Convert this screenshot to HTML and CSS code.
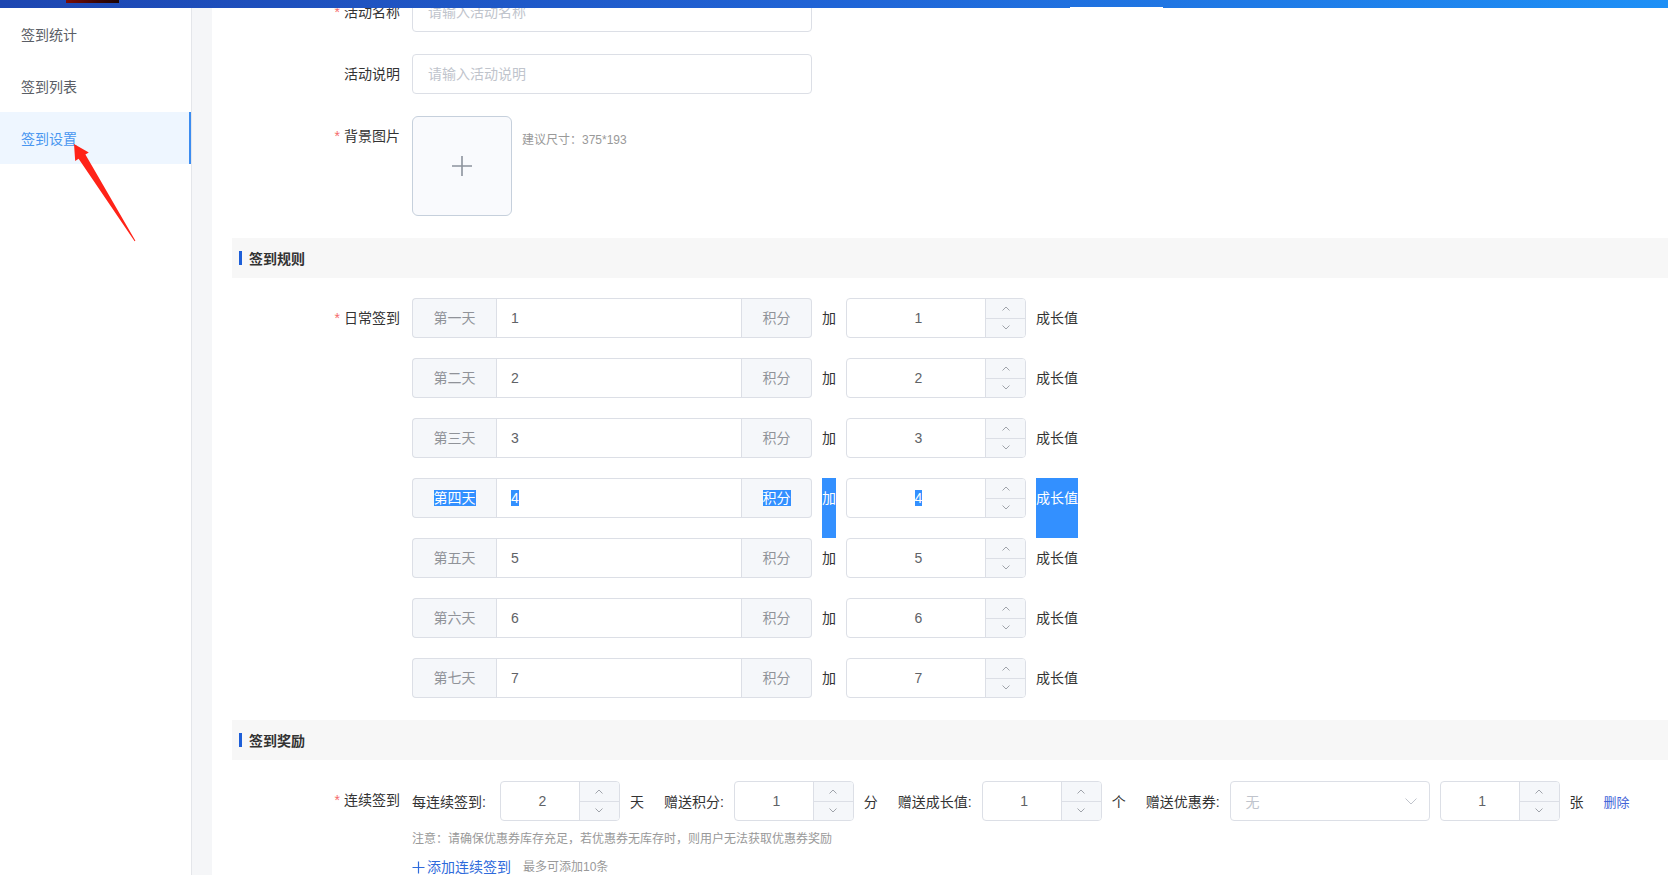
FILE: index.html
```html
<!DOCTYPE html>
<html lang="zh-CN">
<head>
<meta charset="utf-8">
<title>签到设置</title>
<link rel="stylesheet" href="styles.css">
</head>
<body>
<header class="topbar">
  <div class="logo-strip"></div>
  <div class="tab-line"></div>
</header>
<div class="layout">
  <aside class="sidebar">
    <div class="menu-item">签到统计</div>
    <div class="menu-item">签到列表</div>
    <div class="menu-item active">签到设置</div>
  </aside>
  <main class="main">
    <div class="card">
      <div class="form">
        <div class="form-item">
          <div class="label"><span class="req">*</span>活动名称</div>
          <div class="input placeholder">请输入活动名称</div>
        </div>
        <div class="form-item">
          <div class="label">活动说明</div>
          <div class="input placeholder">请输入活动说明</div>
        </div>
        <div class="form-item">
          <div class="label"><span class="req">*</span>背景图片</div>
          <div class="upload">
            <svg width="20" height="20" viewBox="0 0 20 20"><path d="M10 0V20M0 10H20" stroke="#8c939d" stroke-width="1.6" fill="none"/></svg>
          </div>
          <div class="upload-tip">建议尺寸：375*193</div>
        </div>

        <div class="section-head"><span class="bar"></span><span class="section-title">签到规则</span></div>

        <div class="form-item">
          <div class="label"><span class="req">*</span>日常签到</div>
          <div class="rows">
            <div class="row">
              <div class="group"><div class="prepend">第一天</div><div class="mid">1</div><div class="append">积分</div></div>
              <span class="word">加</span>
              <div class="num"><div class="num-val">1</div><div class="ctrl"><div class="ctrl-btn"><svg width="8" height="5" viewBox="0 0 8 5"><path d="M0.5 4.5L4 1L7.5 4.5" stroke="#a0a4ab" fill="none"/></svg></div><div class="ctrl-btn down"><svg width="8" height="5" viewBox="0 0 8 5"><path d="M0.5 0.5L4 4L7.5 0.5" stroke="#a0a4ab" fill="none"/></svg></div></div></div>
              <span class="word wide">成长值</span>
            </div>
            <div class="row">
              <div class="group"><div class="prepend">第二天</div><div class="mid">2</div><div class="append">积分</div></div>
              <span class="word">加</span>
              <div class="num"><div class="num-val">2</div><div class="ctrl"><div class="ctrl-btn"><svg width="8" height="5" viewBox="0 0 8 5"><path d="M0.5 4.5L4 1L7.5 4.5" stroke="#a0a4ab" fill="none"/></svg></div><div class="ctrl-btn down"><svg width="8" height="5" viewBox="0 0 8 5"><path d="M0.5 0.5L4 4L7.5 0.5" stroke="#a0a4ab" fill="none"/></svg></div></div></div>
              <span class="word wide">成长值</span>
            </div>
            <div class="row">
              <div class="group"><div class="prepend">第三天</div><div class="mid">3</div><div class="append">积分</div></div>
              <span class="word">加</span>
              <div class="num"><div class="num-val">3</div><div class="ctrl"><div class="ctrl-btn"><svg width="8" height="5" viewBox="0 0 8 5"><path d="M0.5 4.5L4 1L7.5 4.5" stroke="#a0a4ab" fill="none"/></svg></div><div class="ctrl-btn down"><svg width="8" height="5" viewBox="0 0 8 5"><path d="M0.5 0.5L4 4L7.5 0.5" stroke="#a0a4ab" fill="none"/></svg></div></div></div>
              <span class="word wide">成长值</span>
            </div>
            <div class="row">
              <div class="group"><div class="prepend"><span class="sel">第四天</span></div><div class="mid"><span class="sel">4</span></div><div class="append"><span class="sel">积分</span></div></div>
              <span class="word sel-block">加</span>
              <div class="num"><div class="num-val"><span class="sel">4</span></div><div class="ctrl"><div class="ctrl-btn"><svg width="8" height="5" viewBox="0 0 8 5"><path d="M0.5 4.5L4 1L7.5 4.5" stroke="#a0a4ab" fill="none"/></svg></div><div class="ctrl-btn down"><svg width="8" height="5" viewBox="0 0 8 5"><path d="M0.5 0.5L4 4L7.5 0.5" stroke="#a0a4ab" fill="none"/></svg></div></div></div>
              <span class="word wide sel-block">成长值</span>
            </div>
            <div class="row">
              <div class="group"><div class="prepend">第五天</div><div class="mid">5</div><div class="append">积分</div></div>
              <span class="word">加</span>
              <div class="num"><div class="num-val">5</div><div class="ctrl"><div class="ctrl-btn"><svg width="8" height="5" viewBox="0 0 8 5"><path d="M0.5 4.5L4 1L7.5 4.5" stroke="#a0a4ab" fill="none"/></svg></div><div class="ctrl-btn down"><svg width="8" height="5" viewBox="0 0 8 5"><path d="M0.5 0.5L4 4L7.5 0.5" stroke="#a0a4ab" fill="none"/></svg></div></div></div>
              <span class="word wide">成长值</span>
            </div>
            <div class="row">
              <div class="group"><div class="prepend">第六天</div><div class="mid">6</div><div class="append">积分</div></div>
              <span class="word">加</span>
              <div class="num"><div class="num-val">6</div><div class="ctrl"><div class="ctrl-btn"><svg width="8" height="5" viewBox="0 0 8 5"><path d="M0.5 4.5L4 1L7.5 4.5" stroke="#a0a4ab" fill="none"/></svg></div><div class="ctrl-btn down"><svg width="8" height="5" viewBox="0 0 8 5"><path d="M0.5 0.5L4 4L7.5 0.5" stroke="#a0a4ab" fill="none"/></svg></div></div></div>
              <span class="word wide">成长值</span>
            </div>
            <div class="row">
              <div class="group"><div class="prepend">第七天</div><div class="mid">7</div><div class="append">积分</div></div>
              <span class="word">加</span>
              <div class="num"><div class="num-val">7</div><div class="ctrl"><div class="ctrl-btn"><svg width="8" height="5" viewBox="0 0 8 5"><path d="M0.5 4.5L4 1L7.5 4.5" stroke="#a0a4ab" fill="none"/></svg></div><div class="ctrl-btn down"><svg width="8" height="5" viewBox="0 0 8 5"><path d="M0.5 0.5L4 4L7.5 0.5" stroke="#a0a4ab" fill="none"/></svg></div></div></div>
              <span class="word wide">成长值</span>
            </div>
          </div>
        </div>

        <div class="section-head"><span class="bar"></span><span class="section-title">签到奖励</span></div>

        <div class="form-item last">
          <div class="label"><span class="req">*</span>连续签到</div>
          <div class="reward">
            <div class="reward-row">
              <span class="r-label first">每连续签到:</span>
              <div class="num small"><div class="num-val">2</div><div class="ctrl"><div class="ctrl-btn"><svg width="8" height="5" viewBox="0 0 8 5"><path d="M0.5 4.5L4 1L7.5 4.5" stroke="#a0a4ab" fill="none"/></svg></div><div class="ctrl-btn down"><svg width="8" height="5" viewBox="0 0 8 5"><path d="M0.5 0.5L4 4L7.5 0.5" stroke="#a0a4ab" fill="none"/></svg></div></div></div>
              <span class="unit">天</span>
              <span class="r-label">赠送积分:</span>
              <div class="num small"><div class="num-val">1</div><div class="ctrl"><div class="ctrl-btn"><svg width="8" height="5" viewBox="0 0 8 5"><path d="M0.5 4.5L4 1L7.5 4.5" stroke="#a0a4ab" fill="none"/></svg></div><div class="ctrl-btn down"><svg width="8" height="5" viewBox="0 0 8 5"><path d="M0.5 0.5L4 4L7.5 0.5" stroke="#a0a4ab" fill="none"/></svg></div></div></div>
              <span class="unit">分</span>
              <span class="r-label">赠送成长值:</span>
              <div class="num small"><div class="num-val">1</div><div class="ctrl"><div class="ctrl-btn"><svg width="8" height="5" viewBox="0 0 8 5"><path d="M0.5 4.5L4 1L7.5 4.5" stroke="#a0a4ab" fill="none"/></svg></div><div class="ctrl-btn down"><svg width="8" height="5" viewBox="0 0 8 5"><path d="M0.5 0.5L4 4L7.5 0.5" stroke="#a0a4ab" fill="none"/></svg></div></div></div>
              <span class="unit">个</span>
              <span class="r-label">赠送优惠券:</span>
              <div class="select"><span class="select-ph">无</span><svg width="12" height="7" viewBox="0 0 12 7"><path d="M0.5 0.5L6 6L11.5 0.5" stroke="#c0c4cc" fill="none"/></svg></div>
              <div class="num small"><div class="num-val">1</div><div class="ctrl"><div class="ctrl-btn"><svg width="8" height="5" viewBox="0 0 8 5"><path d="M0.5 4.5L4 1L7.5 4.5" stroke="#a0a4ab" fill="none"/></svg></div><div class="ctrl-btn down"><svg width="8" height="5" viewBox="0 0 8 5"><path d="M0.5 0.5L4 4L7.5 0.5" stroke="#a0a4ab" fill="none"/></svg></div></div></div>
              <span class="unit">张</span>
              <span class="del">删除</span>
            </div>
            <div class="note">注意：请确保优惠券库存充足，若优惠券无库存时，则用户无法获取优惠券奖励</div>
            <div class="add-line">
              <span class="add-link"><svg width="13" height="13" viewBox="0 0 13 13"><path d="M6.5 0.5V12.5M0.5 6.5H12.5" stroke="#2f6bdb" stroke-width="1.2" fill="none"/></svg>添加连续签到</span>
              <span class="add-tip">最多可添加10条</span>
            </div>
          </div>
        </div>
      </div>
    </div>
  </main>
</div>
<svg class="arrow" width="200" height="260" viewBox="0 0 200 260">
  <polygon points="74,144 88.8,152.4 85.4,154.6 135.4,240.7 134.6,241.3 78.6,158.8 75.2,161" fill="#ff2318"/>
</svg>
</body>
</html>
```

FILE: styles.css
```css
* { box-sizing: border-box; }

html, body {
  margin: 0;
  padding: 0;
  width: 1668px;
  height: 875px;
  overflow: hidden;
  background: #ffffff;
  font-family: "Liberation Sans", "Noto Sans CJK SC", sans-serif;
  font-size: 14px;
  color: #333333;
}

.topbar {
  height: 8px;
  display: flex;
  background: linear-gradient(90deg, #1d46b1 0%, #2064d6 50%, #1e90f6 100%);
}

.logo-strip {
  margin-left: 66px;
  width: 53px;
  height: 3px;
  background: linear-gradient(90deg, #7a0d08, #3a0503 60%, #1a0202);
}

.tab-line {
  margin-left: 951px;
  width: 93px;
  height: 1px;
  align-self: flex-end;
  background: #ffffff;
}

.layout {
  display: flex;
  height: 867px;
}

.sidebar {
  width: 192px;
  flex-shrink: 0;
  border-right: 1px solid #e4e6ea;
  background: #ffffff;
}

.menu-item {
  height: 52px;
  line-height: 54px;
  padding-left: 21px;
  color: #5a5e66;
  font-size: 14px;
  overflow: hidden;
}

.menu-item.active {
  background: #eef6ff;
  color: #4896f0;
  border-right: 2px solid #3c8cf0;
}

.main {
  flex: 1;
  background: #f5f6f8;
  padding-left: 20px;
  overflow: hidden;
}

.card {
  background: #ffffff;
  height: 100%;
  padding-left: 20px;
  overflow: hidden;
}

.form {
  margin-top: -16px;
}

.form-item {
  display: flex;
  align-items: flex-start;
  margin-bottom: 22px;
}

.form-item.last {
  margin-bottom: 0;
}

.label {
  width: 180px;
  flex-shrink: 0;
  padding-right: 12px;
  text-align: right;
  line-height: 40px;
  color: #333333;
}

.req {
  color: #f56c6c;
  margin-right: 4px;
}

.input {
  width: 400px;
  height: 40px;
  border: 1px solid #dcdfe6;
  border-radius: 4px;
  padding: 0 15px;
  line-height: 38px;
  color: #606266;
}

.placeholder {
  color: #c0c4cc;
}

.upload {
  width: 100px;
  height: 100px;
  border: 1px solid #c6d0dc;
  border-radius: 6px;
  background: #f9fafd;
  display: flex;
  align-items: center;
  justify-content: center;
}

.upload-tip {
  margin-left: 10px;
  margin-top: 16px;
  line-height: 17px;
  font-size: 12px;
  color: #999999;
}

.section-head {
  height: 40px;
  background: #f7f7f7;
  display: flex;
  align-items: center;
  padding-left: 7px;
  margin-bottom: 20px;
}

.bar {
  width: 3px;
  height: 14px;
  background: #1e5fd8;
}

.section-title {
  margin-left: 7px;
  font-weight: bold;
  color: #333333;
}

.rows {
  display: flex;
  flex-direction: column;
  gap: 20px;
}

.row {
  display: flex;
  align-items: flex-start;
  height: 40px;
}

.group {
  width: 400px;
  height: 40px;
  display: flex;
}

.prepend {
  width: 84px;
  border: 1px solid #dcdfe6;
  border-right: none;
  border-radius: 4px 0 0 4px;
  background: #f5f7fa;
  color: #909399;
  text-align: center;
  line-height: 38px;
}

.mid {
  flex: 1;
  border: 1px solid #dcdfe6;
  padding: 0 15px 0 14px;
  line-height: 38px;
  color: #606266;
}

.append {
  width: 70px;
  border: 1px solid #dcdfe6;
  border-left: none;
  border-radius: 0 4px 4px 0;
  background: #f5f7fa;
  color: #909399;
  text-align: center;
  line-height: 38px;
}

.word {
  width: 14px;
  margin: 0 10px;
  line-height: 40px;
  color: #333333;
  white-space: nowrap;
}

.word.wide {
  width: 42px;
  margin-right: 0;
}

.sel {
  background: #3390ff;
  color: #ffffff;
}

.sel-block {
  background: #3390ff;
  color: #ffffff;
  padding-bottom: 20px;
  margin-bottom: -20px;
}

.num {
  width: 180px;
  height: 40px;
  border: 1px solid #dcdfe6;
  border-radius: 4px;
  display: flex;
  overflow: hidden;
}

.num.small {
  width: 120px;
}

.num-val {
  flex: 1;
  padding-left: 5px;
  text-align: center;
  line-height: 38px;
  color: #606266;
}

.ctrl {
  width: 40px;
  border-left: 1px solid #dcdfe6;
  background: #f5f7fa;
  display: flex;
  flex-direction: column;
}

.ctrl-btn {
  flex: 1;
  display: flex;
  align-items: center;
  justify-content: center;
}

.ctrl-btn.down {
  border-top: 1px solid #dcdfe6;
}

.reward {
  display: flex;
  flex-direction: column;
  padding-top: 1px;
}

.reward-row {
  display: flex;
  align-items: center;
  height: 40px;
  white-space: nowrap;
}

.r-label {
  margin-right: 10px;
  color: #333333;
}

.r-label.first {
  margin-right: 14px;
}

.unit {
  margin: 0 20px 0 10px;
  color: #333333;
}

.select {
  width: 200px;
  height: 40px;
  border: 1px solid #dcdfe6;
  border-radius: 4px;
  padding: 0 12px 0 15px;
  display: flex;
  align-items: center;
  justify-content: space-between;
  margin-right: 10px;
}

.select-ph {
  color: #c0c4cc;
}

.del {
  color: #4364d8;
  font-size: 13px;
}

.note {
  margin-top: 8px;
  line-height: 20px;
  font-size: 12px;
  color: #999999;
}

.add-line {
  margin-top: 8px;
  line-height: 20px;
  display: flex;
  align-items: center;
}

.add-link {
  color: #2f6bdb;
  display: flex;
  align-items: center;
}

.add-link svg {
  margin-right: 2px;
}

.add-tip {
  margin-left: 12px;
  font-size: 12px;
  color: #999999;
}

.arrow {
  position: absolute;
  left: 0;
  top: 0;
  pointer-events: none;
}
```
